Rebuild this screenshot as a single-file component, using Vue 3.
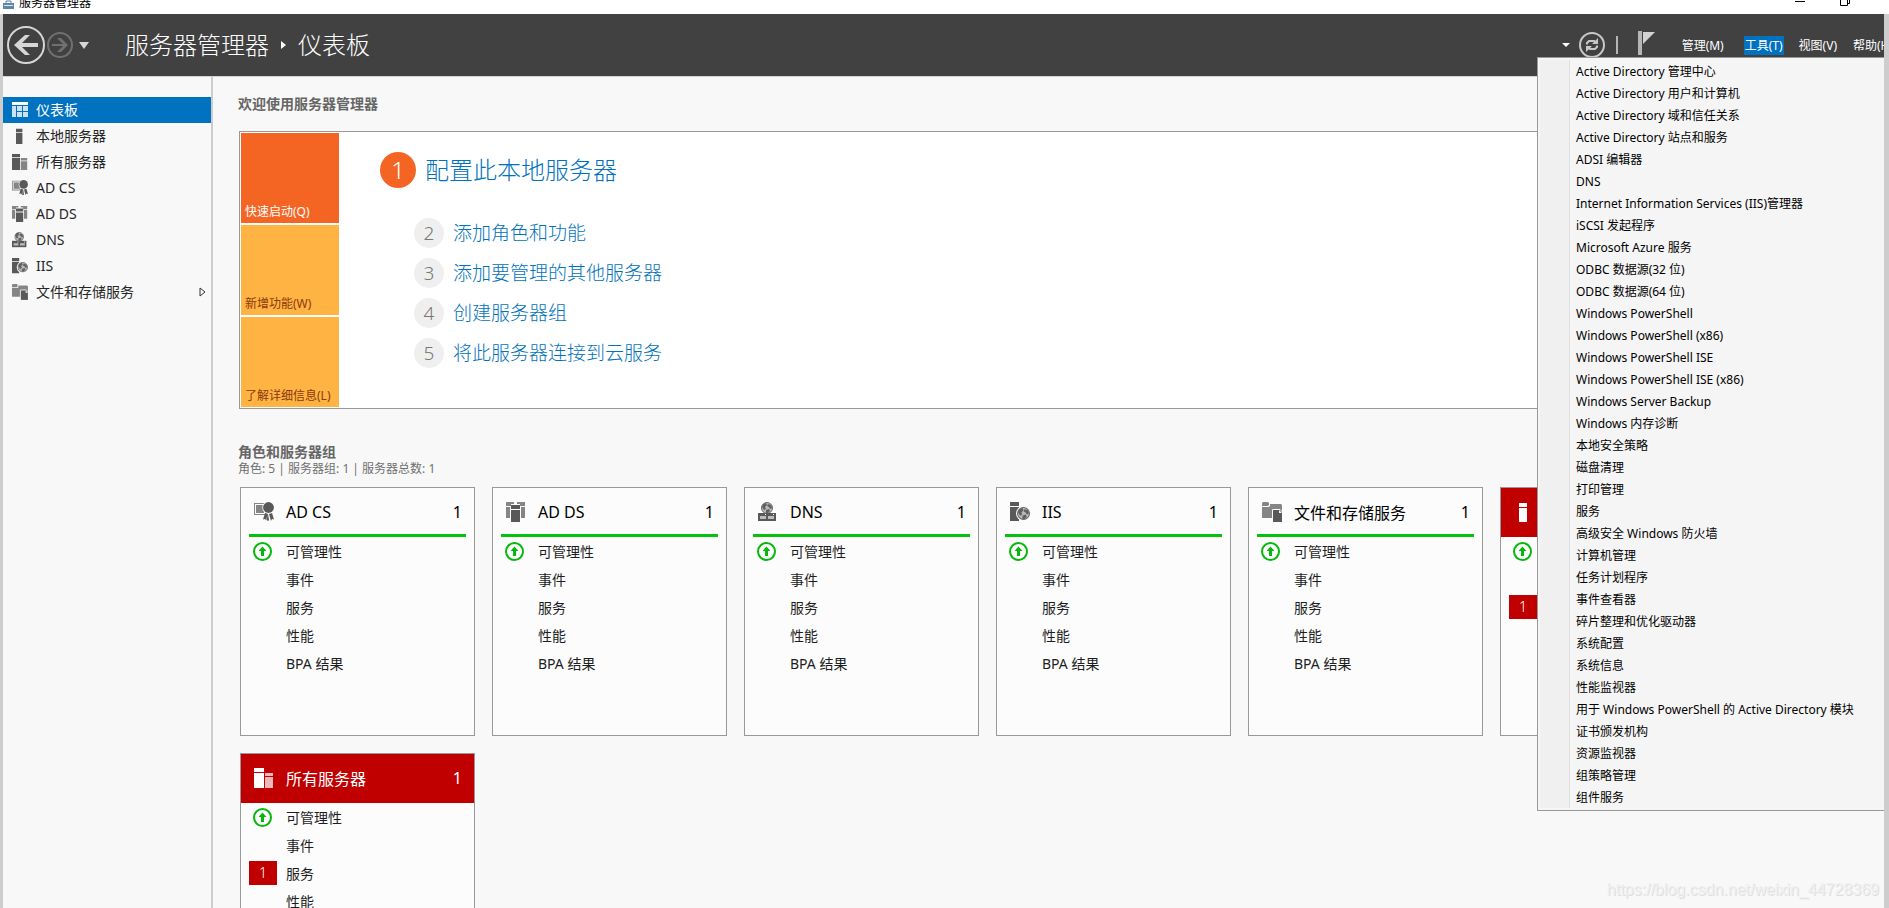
<script setup>
const groups = [
  { icon: 'dashboard', label: '仪表板', active: true },
  { icon: 'server', label: '本地服务器' },
  { icon: 'servers', label: '所有服务器' },
  { icon: 'cert', label: 'AD CS' },
  { icon: 'domain', label: 'AD DS' },
  { icon: 'dns', label: 'DNS' },
  { icon: 'iis', label: 'IIS' },
  { icon: 'files', label: '文件和存储服务', expandable: true }
]

const tiles = [
  { label: '快速启动(Q)', active: true },
  { label: '新增功能(W)' },
  { label: '了解详细信息(L)' }
]

const steps = [
  '配置此本地服务器',
  '添加角色和功能',
  '添加要管理的其他服务器',
  '创建服务器组',
  '将此服务器连接到云服务'
]

const metrics = ['可管理性', '事件', '服务', '性能', 'BPA 结果']

const cards = [
  { icon: 'cert', title: 'AD CS', count: 1 },
  { icon: 'domain', title: 'AD DS', count: 1 },
  { icon: 'dns', title: 'DNS', count: 1 },
  { icon: 'iis', title: 'IIS', count: 1 },
  { icon: 'files', title: '文件和存储服务', count: 1 },
  { icon: 'server', title: '本地服务器', count: 1, alerts: { 服务: 1 } },
  { icon: 'servers', title: '所有服务器', count: 1, alerts: { 服务: 1 } }
]

const menus = [
  { label: '管理(M)' },
  { label: '工具(T)', open: true },
  { label: '视图(V)' },
  { label: '帮助(H)', last: true }
]

const tools = [
  'Active Directory 管理中心',
  'Active Directory 用户和计算机',
  'Active Directory 域和信任关系',
  'Active Directory 站点和服务',
  'ADSI 编辑器',
  'DNS',
  'Internet Information Services (IIS)管理器',
  'iSCSI 发起程序',
  'Microsoft Azure 服务',
  'ODBC 数据源(32 位)',
  'ODBC 数据源(64 位)',
  'Windows PowerShell',
  'Windows PowerShell (x86)',
  'Windows PowerShell ISE',
  'Windows PowerShell ISE (x86)',
  'Windows Server Backup',
  'Windows 内存诊断',
  '本地安全策略',
  '磁盘清理',
  '打印管理',
  '服务',
  '高级安全 Windows 防火墙',
  '计算机管理',
  '任务计划程序',
  '事件查看器',
  '碎片整理和优化驱动器',
  '系统配置',
  '系统信息',
  '性能监视器',
  '用于 Windows PowerShell 的 Active Directory 模块',
  '证书颁发机构',
  '资源监视器',
  '组策略管理',
  '组件服务'
]
</script>

<template>
  <div class="window">
    <svg class="sprite" aria-hidden="true">
      <symbol id="i-dashboard" viewBox="0 0 16 16">
        <path fill="#fff" d="M0 0h16v3H0z" />
        <path fill="#cbe3f4" d="M0 4h4v11H0zM5 4h5v5H5zM11 4h5v5h-5zM5 10h5v5H5zM11 10h5v5h-5z" />
      </symbol>
      <symbol id="i-server" viewBox="0 0 20 20">
        <path fill="currentColor" d="M5 1h8v4H5zM5 6h8v14H5z" />
      </symbol>
      <symbol id="i-servers" viewBox="0 0 20 20">
        <path fill="currentColor" d="M0 0h10v4H0zM0 5h10v15H0z" />
        <path fill="currentColor" fill-opacity=".72" d="M11 5h8v3h-8zM11 9h8v11h-8z" />
      </symbol>
      <symbol id="i-cert" viewBox="0 0 20 20">
        <path fill="#858585" d="M0 1h12v12H0zM1 2v10h10V2z" fill-rule="evenodd" />
        <path fill="#858585" d="M2 3h8v8H2z" />
        <circle cx="14.5" cy="5.5" r="6.2" fill="#fbfbfb" />
        <path fill="#595959" d="M11 11l3 1-2 6-1-1-2 .5zM18 11l2 6.500-2-.5-1 2-2-7zM14 12l1 6-1 1-1.500-1z" />
        <circle cx="14.5" cy="5.5" r="5.400" fill="#595959" />
      </symbol>
      <symbol id="i-domain" viewBox="0 0 20 20">
        <path fill="#858585" d="M0 0h8v2H5v2H0zM11 0h8v4h-5V2h-3zM0 5h4v11H0zM15 5h4v11h-4z" />
        <path fill="#595959" d="M5 3h9v4H5zM5 8h9v12H5z" />
      </symbol>
      <symbol id="i-globe" viewBox="0 0 12 12">
        <circle cx="6" cy="6" r="5.500" fill="#b8b8b8" stroke="#6a6a6a" />
        <path fill="#606060" d="M2 2l3-1 1 2-2 2 1 2-2 1-2-3zM7 2l3 1 1 3-2 1-1-2-2-1zM5 8l3-1 1 2-2 2H5z" />
      </symbol>
      <symbol id="i-dns" viewBox="0 0 20 20">
        <use href="#i-globe" x="3" y="0" width="12" height="12" />
        <path fill="#595959" d="M0 11h18v8H0z" />
        <path fill="#fff" d="M7 12h1v1H7zM15 12h1v1h-1z" />
        <path fill="#bdbdbd" d="M2 14h6v3H2zM10 14h6v3h-6z" />
      </symbol>
      <symbol id="i-iis" viewBox="0 0 20 20">
        <path fill="#595959" d="M0 0h9v4H0zM0 5h9v14H0z" />
        <circle cx="13.500" cy="11.500" r="7.500" fill="#fbfbfb" />
        <use href="#i-globe" x="7" y="5" width="13" height="13" />
      </symbol>
      <symbol id="i-files" viewBox="0 0 20 20">
        <path fill="#858585" d="M1 0h5l1 1v2l-1 1H0V1zM8 2h11l1 1v13H0V5h7l1-1z" />
        <path fill="#595959" stroke="#fbfbfb" d="M10.500 7.500H18l2.500 2.500v10.500h-10z" />
        <path fill="#fbfbfb" d="M17 8l3 3h-3z" />
      </symbol>
      <symbol id="i-up" viewBox="0 0 19 19">
        <circle cx="9.500" cy="9.500" r="8.500" fill="#fff" stroke="#06b80c" stroke-width="2" />
        <path fill="#06b80c" d="M9.500 4.500l4 4.500h-2.500v5H8V9H5.500z" />
      </symbol>
    </svg>

    <div class="titlebar">
      <svg class="app-icon" viewBox="0 0 11 9" aria-hidden="true">
        <path fill="#5d87a5" d="M0 3h11v6H0z" />
        <path fill="none" stroke="#5d87a5" d="M3 3V1h5v2" />
        <path fill="#dbe7ef" d="M1 5h9v1H1z" />
      </svg>
      <span class="caption">服务器管理器</span>
      <button class="win-btn" aria-label="最小化">
        <svg viewBox="0 0 12 8"><path d="M1 1.500h10" stroke="#000" /></svg>
      </button>
      <button class="win-btn" aria-label="还原">
        <svg viewBox="0 0 12 8"><path d="M1.500-2v7.500h7V-2M8.500 3.500h2V-2" fill="none" stroke="#000" /></svg>
      </button>
    </div>

    <div class="frame">
      <header class="header">
        <button class="nav-btn" aria-label="后退">
          <svg width="38" height="38" viewBox="0 0 38 38">
            <circle cx="19" cy="19" r="18" fill="none" stroke="#d6d6d6" stroke-width="2" />
            <path fill="#d6d6d6" d="M7 19l11-10h5l-8 8h16v4H15l8 8h-5z" />
          </svg>
        </button>
        <button class="nav-btn" aria-label="前进">
          <svg width="26" height="26" viewBox="0 0 26 26">
            <circle cx="13" cy="13" r="12" fill="none" stroke="#707070" stroke-width="2" />
            <path fill="#707070" d="M21 13l-7 7h-4l6-6H5v-2h11l-6-6h4z" />
          </svg>
        </button>
        <button class="nav-btn history" aria-label="历史记录">
          <svg width="10" height="7" viewBox="0 0 10 7"><path fill="#d6d6d6" d="M0 0h10L5 7z" /></svg>
        </button>
        <h1 class="crumbs">
          <span>服务器管理器</span>
          <svg width="5" height="8" viewBox="0 0 5 8" aria-hidden="true"><path fill="#fff" d="M0 0l5 4-5 4z" /></svg>
          <span>仪表板</span>
        </h1>

        <div class="toolbar">
          <button class="nav-btn" aria-label="刷新选项">
            <svg width="8" height="4" viewBox="0 0 8 4"><path fill="#fff" d="M0 0h8L4 4z" /></svg>
          </button>
          <button class="nav-btn refresh" aria-label="刷新">
            <svg width="26" height="26" viewBox="0 0 26 26">
              <circle cx="13" cy="13" r="12" fill="none" stroke="#c8c8c8" stroke-width="2" />
              <path fill="none" stroke="#c8c8c8" stroke-width="2" d="M8 12.500V11l2-2h5l2 1.500M18 13.500V15l-2 2h-5l-2-1.500" />
              <path fill="#c8c8c8" d="M19 6v6h-6zM7 20v-6h6z" />
            </svg>
          </button>
          <span class="divider"></span>
          <button class="nav-btn flag" aria-label="通知">
            <svg width="18" height="24" viewBox="0 0 18 24">
              <path fill="#b5b5b5" d="M0 0h4v24H0z" />
              <path fill="#d2d2d2" d="M5 1h12L5 13z" />
            </svg>
          </button>
          <nav class="menubar">
            <button v-for="m in menus" :key="m.label" class="menu-btn" :class="{ open: m.open, last: m.last }">{{ m.label }}</button>
          </nav>
        </div>
      </header>

      <div class="body">
        <nav class="sidebar">
          <button v-for="g in groups" :key="g.label" class="side-item" :class="{ active: g.active }">
            <svg class="side-icon" aria-hidden="true"><use :href="'#i-' + g.icon" /></svg>
            <span>{{ g.label }}</span>
            <svg v-if="g.expandable" class="expand" viewBox="0 0 7 10" aria-hidden="true">
              <path d="M1 1l5 4-5 4z" fill="none" stroke="#333" />
            </svg>
          </button>
        </nav>

        <main class="content">
          <h2 class="section-title">欢迎使用服务器管理器</h2>
          <section class="welcome">
            <div class="tiles">
              <button v-for="t in tiles" :key="t.label" class="tile" :class="{ active: t.active }">{{ t.label }}</button>
            </div>
            <ol class="steps">
              <li v-for="(s, i) in steps" :key="s" class="step" :class="{ first: i === 0 }">
                <span class="num">{{ i + 1 }}</span>
                <a href="#">{{ s }}</a>
              </li>
            </ol>
          </section>

          <h2 class="section-title roles-title">角色和服务器组</h2>
          <p class="summary">角色: 5 | 服务器组: 1 | 服务器总数: 1</p>
          <section class="cards">
            <article v-for="c in cards" :key="c.title" class="card" :class="{ alert: c.alerts }">
              <h3 class="card-head">
                <svg class="card-icon" aria-hidden="true"><use :href="'#i-' + c.icon" /></svg>
                <span class="card-title">{{ c.title }}</span>
                <span>{{ c.count }}</span>
              </h3>
              <ul class="metrics">
                <li v-for="(m, i) in metrics" :key="m" class="metric">
                  <span class="status">
                    <svg v-if="i === 0" class="up" aria-hidden="true"><use href="#i-up" /></svg>
                    <span v-else-if="c.alerts && c.alerts[m]" class="badge">{{ c.alerts[m] }}</span>
                  </span>
                  <span class="metric-name">{{ m }}</span>
                </li>
              </ul>
            </article>
          </section>
        </main>
      </div>
    </div>

    <div class="tools-menu" role="menu">
      <button v-for="t in tools" :key="t" class="tool" role="menuitem">{{ t }}</button>
    </div>
    <span class="watermark">https://blog.csdn.net/weixin_44728369</span>
  </div>
</template>

<style>
body {
  margin: 0;
  overflow: hidden;
}
</style>

<style scoped>
.window {
  position: relative;
  display: flex;
  flex-direction: column;
  height: 100vh;
  overflow: hidden;
  background: #fff;
  color: #1e1e1e;
  font-family: "Noto Sans", "Noto Sans CJK SC", sans-serif;
  font-size: 14px;
}
.sprite {
  position: absolute;
  width: 0;
  height: 0;
}
button {
  margin: 0;
  padding: 0;
  border: 0;
  background: none;
  color: inherit;
  font: inherit;
  text-align: left;
  white-space: nowrap;
}
svg {
  flex: none;
  display: block;
}
h1, h2, h3, p, ol, ul {
  margin: 0;
  padding: 0;
  font-weight: 400;
  list-style: none;
}

.titlebar {
  display: flex;
  flex: none;
  align-items: flex-start;
  height: 14px;
  padding: 0 38px 0 3px;
  overflow: hidden;
}
.app-icon {
  width: 11px;
  height: 9px;
  margin-right: 5px;
}
.caption {
  flex: 1;
  margin-top: -5px;
  color: #000;
  font-size: 12px;
  line-height: 16px;
}
.win-btn {
  margin-left: 33px;
}
.win-btn svg {
  width: 12px;
  height: 8px;
}

.frame {
  display: flex;
  flex: 1;
  flex-direction: column;
  min-height: 0;
  border: solid #cdcdcd;
  border-width: 0 5px 0 3px;
  background: #f8f8f8;
}
.header {
  display: flex;
  flex: none;
  align-items: center;
  height: 62px;
  padding-left: 4px;
  background: #414141;
  color: #fff;
  border-bottom: 1px solid #d4d4d4;
}
.nav-btn + .nav-btn {
  margin-left: 2px;
}
.nav-btn.history {
  margin-left: 6px;
}
.crumbs {
  display: flex;
  flex: 1;
  align-items: center;
  gap: 12px;
  margin-left: 36px;
  font-size: 24px;
  font-weight: 300;
  line-height: 32px;
  white-space: nowrap;
}
.toolbar {
  display: flex;
  align-items: center;
}
.nav-btn.refresh {
  margin-left: 9px;
}
.divider {
  width: 2px;
  height: 18px;
  margin-left: 11px;
  background: #b5b5b5;
}
.flag {
  margin: 0 25px 4px 20px;
}
.menubar {
  display: flex;
  gap: 14px;
}
.menu-btn {
  padding: 1px 1px 0;
  font-size: 12px;
  line-height: 18px;
}
.menu-btn:first-child {
  margin-right: 5px;
}
.menu-btn.open {
  background: #0072c0;
}
.menu-btn.last {
  width: 32px;
  overflow: hidden;
}

.body {
  display: flex;
  flex: 1;
  min-height: 0;
}
.sidebar {
  flex: none;
  width: 208px;
  padding-top: 20px;
  border-right: 2px solid #cdcdcd;
}
.side-item {
  display: flex;
  align-items: center;
  width: 100%;
  height: 26px;
  padding: 0 5px 0 9px;
  color: #262626;
}
.side-item.active {
  background: #0072c0;
  color: #fff;
}
.side-icon {
  width: 16px;
  height: 16px;
  margin-right: 8px;
  color: #595959;
}
.side-item span {
  flex: 1;
  padding-bottom: 2px;
}
.expand {
  width: 7px;
  height: 10px;
}

.content {
  flex: 1;
  min-width: 0;
  padding: 17px 0 0 25px;
  overflow: hidden;
}
.section-title {
  color: #666;
  font-size: 14px;
  font-weight: 700;
  line-height: 20px;
}
.welcome {
  display: flex;
  margin: 17px 0 0 1px;
  padding: 1px;
  border: 1px solid #999;
  border-right: 0;
  background: #fff;
}
.tiles {
  display: grid;
  grid-template-columns: 98px;
  grid-auto-rows: 90px;
  gap: 2px;
}
.tile {
  display: flex;
  align-items: flex-end;
  padding: 0 4px 2px;
  background: #ffb343;
  color: #8a3a0c;
  font-size: 12px;
  line-height: 18px;
}
.tile.active {
  background: #f46523;
  color: #fff;
}
.steps {
  display: flex;
  flex-direction: column;
  gap: 10px;
  padding: 19px 0 0 75px;
  font-size: 19px;
  font-weight: 300;
  line-height: 30px;
}
.step {
  display: flex;
  align-items: center;
  gap: 9px;
}
.step a {
  color: #0072bc;
  text-decoration: none;
}
.num {
  width: 30px;
  height: 30px;
  border-radius: 50%;
  background: #efefef;
  color: #777;
  text-align: center;
}
.step.first {
  margin: 0 0 20px -34px;
  font-size: 24px;
  line-height: 36px;
}
.first .num {
  width: 36px;
  height: 36px;
  background: #f46523;
  color: #fff;
}

.roles-title {
  margin-top: 33px;
}
.summary {
  color: #707070;
  font-size: 12px;
  line-height: 14px;
}
.cards {
  display: grid;
  grid-template-columns: repeat(auto-fill, 235px);
  gap: 17px;
  margin: 11px 0 0 2px;
}
.card {
  box-sizing: border-box;
  height: 249px;
  border: 1px solid #999;
  background: #fcfcfc;
}
.card-head {
  display: flex;
  align-items: center;
  box-sizing: border-box;
  height: 49px;
  margin: 0 8px;
  padding: 2px 4px 0 5px;
  border-bottom: 3px solid #06c20c;
  color: #000;
  font-size: 16px;
}
.alert .card-head {
  margin: 0;
  padding: 2px 12px 0 13px;
  border-color: #c00000;
  background: #c00000;
  color: #fff;
}
.card-icon {
  width: 20px;
  height: 20px;
  margin-right: 12px;
  color: #595959;
}
.alert .card-icon {
  color: #fff;
}
.card-title {
  flex: 1;
}
.metrics {
  padding: 0 8px;
}
.metric {
  display: flex;
  align-items: center;
  height: 28px;
}
.status {
  width: 28px;
  margin-right: 9px;
}
.up {
  width: 19px;
  height: 19px;
  margin-left: 4px;
}
.badge {
  display: block;
  background: #c00000;
  color: #fff;
  font-weight: 300;
  line-height: 24px;
  text-align: center;
}

.tools-menu {
  position: absolute;
  top: 57px;
  right: 5px;
  display: flex;
  flex-direction: column;
  box-sizing: border-box;
  width: 347px;
  padding: 2px 0 2px 2px;
  border: 1px solid #999;
  border-right: 0;
  background: #f5f5f5;
}
.tool {
  box-sizing: border-box;
  height: 22px;
  padding: 2px 0 0 7px;
  border-left: 29px solid #f0f0f0;
  box-shadow: inset 1px 0 #e0e0e0;
  color: #000;
  font-size: 12px;
  line-height: 20px;
}
.watermark {
  position: absolute;
  right: 10px;
  bottom: 8px;
  color: #f0f0f0;
  font-family: "Liberation Sans", sans-serif;
  font-size: 16px;
  line-height: 20px;
  text-shadow: 1px 1px #dedede;
}
</style>
